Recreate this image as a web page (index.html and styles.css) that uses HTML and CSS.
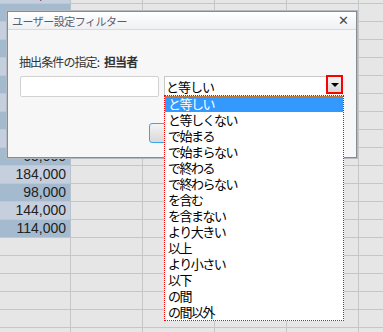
FILE: index.html
```html
<!DOCTYPE html>
<html lang="ja">

<head>
    <meta charset="UTF-8">
    <meta name="viewport" content="width=device-width, initial-scale=1.0">
    <title>ユーザー設定フィルター</title>
    <link rel="stylesheet" href="styles.css">
</head>

<body>
    <div class="sheet">
        <div class="row light"><div class="cell num">103,000</div><div class="cell"></div><div class="cell"></div><div class="cell"></div><div class="cell"></div><div class="cell"></div></div>
        <div class="row dark"><div class="cell num"></div><div class="cell"></div><div class="cell"></div><div class="cell"></div><div class="cell"></div><div class="cell"></div></div>
        <div class="row light"><div class="cell num"></div><div class="cell"></div><div class="cell"></div><div class="cell"></div><div class="cell"></div><div class="cell"></div></div>
        <div class="row dark"><div class="cell num"></div><div class="cell"></div><div class="cell"></div><div class="cell"></div><div class="cell"></div><div class="cell"></div></div>
        <div class="row light"><div class="cell num"></div><div class="cell"></div><div class="cell"></div><div class="cell"></div><div class="cell"></div><div class="cell"></div></div>
        <div class="row dark"><div class="cell num"></div><div class="cell"></div><div class="cell"></div><div class="cell"></div><div class="cell"></div><div class="cell"></div></div>
        <div class="row light"><div class="cell num"></div><div class="cell"></div><div class="cell"></div><div class="cell"></div><div class="cell"></div><div class="cell"></div></div>
        <div class="row dark"><div class="cell num"></div><div class="cell"></div><div class="cell"></div><div class="cell"></div><div class="cell"></div><div class="cell"></div></div>
        <div class="row light"><div class="cell num"></div><div class="cell"></div><div class="cell"></div><div class="cell"></div><div class="cell"></div><div class="cell"></div></div>
        <div class="row dark"><div class="cell num">65,000</div><div class="cell"></div><div class="cell"></div><div class="cell"></div><div class="cell"></div><div class="cell"></div></div>
        <div class="row light"><div class="cell num">184,000</div><div class="cell"></div><div class="cell"></div><div class="cell"></div><div class="cell"></div><div class="cell"></div></div>
        <div class="row dark"><div class="cell num">98,000</div><div class="cell"></div><div class="cell"></div><div class="cell"></div><div class="cell"></div><div class="cell"></div></div>
        <div class="row light"><div class="cell num">144,000</div><div class="cell"></div><div class="cell"></div><div class="cell"></div><div class="cell"></div><div class="cell"></div></div>
        <div class="row dark"><div class="cell num">114,000</div><div class="cell"></div><div class="cell"></div><div class="cell"></div><div class="cell"></div><div class="cell"></div></div>
        <div class="row"><div class="cell"></div><div class="cell"></div><div class="cell"></div><div class="cell"></div><div class="cell"></div><div class="cell"></div></div>
        <div class="row"><div class="cell"></div><div class="cell"></div><div class="cell"></div><div class="cell"></div><div class="cell"></div><div class="cell"></div></div>
        <div class="row"><div class="cell"></div><div class="cell"></div><div class="cell"></div><div class="cell"></div><div class="cell"></div><div class="cell"></div></div>
        <div class="row"><div class="cell"></div><div class="cell"></div><div class="cell"></div><div class="cell"></div><div class="cell"></div><div class="cell"></div></div>
        <div class="row"><div class="cell"></div><div class="cell"></div><div class="cell"></div><div class="cell"></div><div class="cell"></div><div class="cell"></div></div>
        <div class="row"><div class="cell"></div><div class="cell"></div><div class="cell"></div><div class="cell"></div><div class="cell"></div><div class="cell"></div></div>
    </div>

    <div class="dialog">
        <div class="titlebar">
            <span class="title">ユーザー設定フィルター</span>
            <span class="close">✕</span>
        </div>
        <div class="dialog-body">
            <p class="condition">抽出条件の指定: <b>担当者</b></p>
            <div class="fields">
                <input type="text" class="value-input">
                <div class="select">
                    <span class="select-value">と等しい</span>
                    <span class="drop-btn"><span class="arrow"></span></span>
                    <ul class="options">
                        <li class="selected">と等しい</li>
                        <li>と等しくない</li>
                        <li>で始まる</li>
                        <li>で始まらない</li>
                        <li>で終わる</li>
                        <li>で終わらない</li>
                        <li>を含む</li>
                        <li>を含まない</li>
                        <li>より大きい</li>
                        <li>以上</li>
                        <li>より小さい</li>
                        <li>以下</li>
                        <li>の間</li>
                        <li>の間以外</li>
                    </ul>
                </div>
            </div>
            <div class="buttons">
                <button type="button" class="button focus"></button>
                <button type="button" class="button"></button>
            </div>
        </div>
    </div>
</body>

</html>
```

FILE: styles.css
```css
body {
    margin: 0;
    background-color: #e6e6e6;
    font-family: "Noto Sans CJK JP", sans-serif;
    overflow: hidden;
}

/* spreadsheet behind the dialog */
.sheet {
    margin-top: -14px;
}

.row {
    display: grid;
    grid-template-columns: 71px 72px 72px 72px 72px 1fr;
    height: 18px;
}

.cell {
    box-sizing: border-box;
    border-right: 1px solid #c6c6c6;
    border-bottom: 1px solid #c6c6c6;
    background-color: #e6e6e6;
}

.cell:last-child {
    border-right: none;
}

.row.light .num {
    background-color: #c6cfde;
}

.row.dark .num {
    background-color: #a4bbcf;
}

.num {
    font-family: "Liberation Sans", Arial, sans-serif;
    font-size: 14px;
    line-height: 17px;
    color: #222;
    text-align: right;
    padding-right: 4px;
    border-right-color: #b8c2cc;
}

/* dialog */
.dialog {
    position: absolute;
    left: 7px;
    top: 11px;
    width: 350px;
    height: 147px;
    box-sizing: border-box;
    border: 1px solid #868c94;
    box-shadow: 0 0 0 1px #b4bac1;
    background-color: #f7f7f7;
}

.titlebar {
    display: flex;
    align-items: center;
    justify-content: space-between;
    height: 17px;
    padding: 0 7px 0 4px;
    background: linear-gradient(#ffffff, #eef0f3);
    border-bottom: 1px solid #d6dae0;
}

.title {
    font-size: 11px;
    letter-spacing: -0.5px;
    color: #5c5c6c;
}

.close {
    font-family: "DejaVu Sans", sans-serif;
    font-size: 13px;
    font-weight: bold;
    color: #4a4a4a;
}

.dialog-body {
    padding: 24px 12px 0 12px;
}

.condition {
    margin: 0 0 6px -1px;
    font-size: 12px;
    line-height: 16px;
    letter-spacing: -0.9px;
    color: #333;
}

.condition b {
    font-weight: bold;
    margin-left: 3px;
}

.fields {
    display: flex;
    gap: 5px;
}

.value-input {
    width: 139px;
    height: 21px;
    box-sizing: border-box;
    margin: 0;
    border: 1px solid #d2d2d2;
    border-radius: 2px;
    background-color: #fff;
}

.select {
    position: relative;
    width: 179px;
    height: 21px;
    box-sizing: border-box;
    border: 1px solid #c8c8c8;
    background-color: #fff;
    font-size: 13px;
    line-height: 19px;
    letter-spacing: -1px;
    color: #000;
}

.select-value {
    padding-left: 1px;
}

.drop-btn {
    position: absolute;
    right: -1px;
    top: -2px;
    width: 17px;
    height: 19px;
    box-sizing: border-box;
    border: 2px solid #ff0000;
    background: linear-gradient(#f6f6f6, #d6d6d6);
    display: flex;
    align-items: center;
    justify-content: center;
}

.arrow {
    width: 0;
    height: 0;
    border-left: 4px solid transparent;
    border-right: 4px solid transparent;
    border-top: 4px solid #000;
}

.options {
    position: absolute;
    left: -1px;
    top: 18px;
    width: 180px;
    height: 226px;
    box-sizing: border-box;
    margin: 0;
    padding: 0;
    list-style: none;
    border: 1px dotted #ff0000;
    background-color: #fff;
    z-index: 2;
}

.options li {
    height: 16px;
    line-height: 16px;
    padding-left: 3px;
    font-size: 13px;
    letter-spacing: -1.5px;
    color: #000;
}

.options li.selected {
    background-color: #3399ff;
    color: #fff;
    outline: 1px dotted #c07a3a;
    outline-offset: -1px;
}

.buttons {
    display: flex;
    justify-content: flex-end;
    gap: 5px;
    margin-top: 26px;
}

.button {
    width: 95px;
    height: 20px;
    border: 1px solid #b0b0b0;
    border-radius: 3px;
    background: linear-gradient(#f3f3f3, #d8d8d8);
}

.button.focus {
    border-color: #3aa6ea;
}
```
